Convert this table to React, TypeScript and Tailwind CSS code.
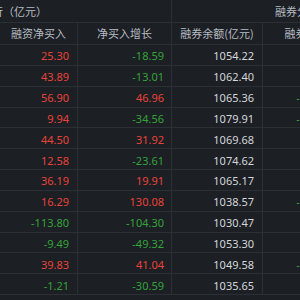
import React from "react";

const A = ["25.30","43.89","56.90","9.94","44.50","12.58","36.19","16.29","-113.80","-9.49","39.83","-1.21"];
const B = ["-18.59","-13.01","46.96","-34.56","31.92","-23.61","19.91","130.08","-104.30","-49.32","41.04","-30.59"];
const C = ["1054.22","1062.40","1065.36","1079.91","1069.68","1074.62","1065.17","1038.57","1030.47","1053.30","1049.58","1035.65"];
const D = ["8.18","2.94","-12.96","-11.46","4.52","0.13","5.11","-13.57","0.45","7.80","-12.71","9.33"];

const color = (v: string) => (v.startsWith("-") ? "text-[#35a23c]" : "text-[#e8433b]");

export default function App() {
  return (
    <div
      className="w-[300px] h-[300px] overflow-hidden bg-[#1c1f23] text-[11px] leading-none"
      style={{ fontFamily: '"Noto Sans", "Noto Sans CJK SC", sans-serif' }}
    >
      <div className="w-[400px]">
        {/* group header */}
        <div className="flex h-[23px] border-b border-[#2c3036] text-[#b7bcc4]">
          <div className="w-[172px] shrink-0 border-r border-[#2c3036] flex items-center">
            <span className="-ml-[8px] whitespace-nowrap" style={{ fontFamily: '"Noto Sans CJK SC", sans-serif' }}>行（亿元）</span>
          </div>
          <div className="flex-1 flex items-center pl-[103px]">
            <span className="whitespace-nowrap" style={{ fontFamily: '"Noto Sans CJK SC", sans-serif' }}>融券分析（亿元）</span>
          </div>
        </div>
        {/* column header */}
        <div
          className="grid grid-cols-[78px_94px_91px_88px_49px] h-[22px] border-b border-[#2c3036] text-[#b7bcc4]"
          style={{ fontFamily: '"Noto Sans CJK SC", sans-serif' }}
        >
          <div className="flex items-center justify-center border-r border-[#2c3036] whitespace-nowrap">融资净买入</div>
          <div className="flex items-center justify-center border-r border-[#2c3036] whitespace-nowrap">净买入增长</div>
          <div className="flex items-center justify-center border-r border-[#2c3036] whitespace-nowrap">融券余额(亿元)</div>
          <div className="flex items-center justify-center border-r border-[#2c3036] whitespace-nowrap">融券卖出</div>
          <div />
        </div>
        {A.map((a, i) => (
          <div
            key={i}
            className="grid grid-cols-[78px_94px_91px_88px_49px] h-[20.85px] border-b border-[#2c3036]"
          >
            <div className={`flex items-center justify-end pr-[8px] pt-[2px] border-r border-[#2c3036] ${color(a)}`}>{a}</div>
            <div className={`flex items-center justify-end pr-[7px] pt-[2px] border-r border-[#2c3036] ${color(B[i])}`}>{B[i]}</div>
            <div className="flex items-center justify-end pr-[8px] pt-[2px] border-r border-[#2c3036] text-[#d3d6db]">{C[i]}</div>
            <div className={`flex items-center justify-end pr-[22px] pt-[2px] border-r border-[#2c3036] ${color(D[i])}`}>{D[i]}</div>
            <div />
          </div>
        ))}
      </div>
    </div>
  );
}
